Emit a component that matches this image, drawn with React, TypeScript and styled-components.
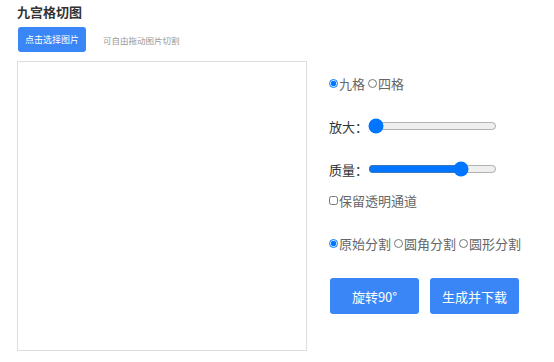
import React from 'react'
import styled, { createGlobalStyle } from 'styled-components'

const GlobalStyle = createGlobalStyle`
  body {
    margin: 0;
    background: #fff;
    font-family: "Noto Sans CJK SC", "Noto Sans", sans-serif;
    color: #333;
  }
`

const Page = styled.div`
  padding: 3px 17px 0;
`

const Title = styled.h3`
  margin: 0;
  font-size: 13px;
  font-weight: 700;
  line-height: 18px;
  color: #333;
`

const Toolbar = styled.div`
  display: flex;
  align-items: center;
  margin-top: 6px;
  gap: 17px;
`

const PickButton = styled.button`
  width: 68px;
  height: 25px;
  margin-left: 1px;
  padding: 0;
  border: none;
  border-radius: 3px;
  background: #3a86f6;
  color: #fff;
  font-family: inherit;
  font-size: 9px;
`

const Hint = styled.span`
  font-size: 8.5px;
  color: #999;
`

const Body = styled.div`
  display: flex;
  margin-top: 9px;
  gap: 22px;
`

const Canvas = styled.div`
  width: 288px;
  height: 288px;
  border: 1px solid #ddd;
  box-sizing: content-box;
`

const Panel = styled.div`
  display: flex;
  flex-direction: column;
  padding-top: 13px;
`

const Row = styled.label<{ $gap?: number }>`
  display: flex;
  align-items: center;
  height: 18px;
  margin-top: ${(p) => p.$gap ?? 0}px;
  font-size: 13px;
  color: #666;
  white-space: nowrap;
`

const Option = styled.span`
  display: inline-flex;
  align-items: center;
  margin-right: 3px;
`

const Radio = styled.input.attrs({ type: 'radio' })`
  width: 9px;
  height: 9px;
  margin: 0 1px 0 0;
  accent-color: #0075ff;
`

const Check = styled.input.attrs({ type: 'checkbox' })`
  width: 9px;
  height: 9px;
  margin: 0 1px 0 0;
`

const SliderRow = styled.div<{ $gap: number }>`
  display: flex;
  align-items: center;
  height: 18px;
  margin-top: ${(p) => p.$gap}px;
  font-size: 13px;
  color: #333;
`

const Range = styled.input.attrs({ type: 'range' })`
  width: 129px;
  margin: 0;
`

const Actions = styled.div`
  display: flex;
  gap: 11px;
  margin-top: 26px;
  margin-left: 1px;
`

const ActionButton = styled.button`
  width: 89px;
  height: 36px;
  padding: 0;
  border: none;
  border-radius: 3px;
  background: #3a86f6;
  color: #fff;
  font-family: inherit;
  font-size: 13px;
`

export default function App() {
  return (
    <>
      <GlobalStyle />
      <Page>
        <Title>九宫格切图</Title>
        <Toolbar>
          <PickButton>点击选择图片</PickButton>
          <Hint>可自由拖动图片切割</Hint>
        </Toolbar>
        <Body>
          <Canvas />
          <Panel>
            <Row>
              <Option><Radio name="grid" defaultChecked />九格</Option>
              <Option><Radio name="grid" />四格</Option>
            </Row>
            <SliderRow $gap={25}>
              放大：<Range min={1} max={100} defaultValue={1} />
            </SliderRow>
            <SliderRow $gap={25}>
              质量：<Range min={0} max={100} defaultValue={75} />
            </SliderRow>
            <Row $gap={13}>
              <Check />保留透明通道
            </Row>
            <Row $gap={25}>
              <Option><Radio name="shape" defaultChecked />原始分割</Option>
              <Option><Radio name="shape" />圆角分割</Option>
              <Option><Radio name="shape" />圆形分割</Option>
            </Row>
            <Actions>
              <ActionButton>旋转90°</ActionButton>
              <ActionButton>生成并下载</ActionButton>
            </Actions>
          </Panel>
        </Body>
      </Page>
    </>
  )
}
